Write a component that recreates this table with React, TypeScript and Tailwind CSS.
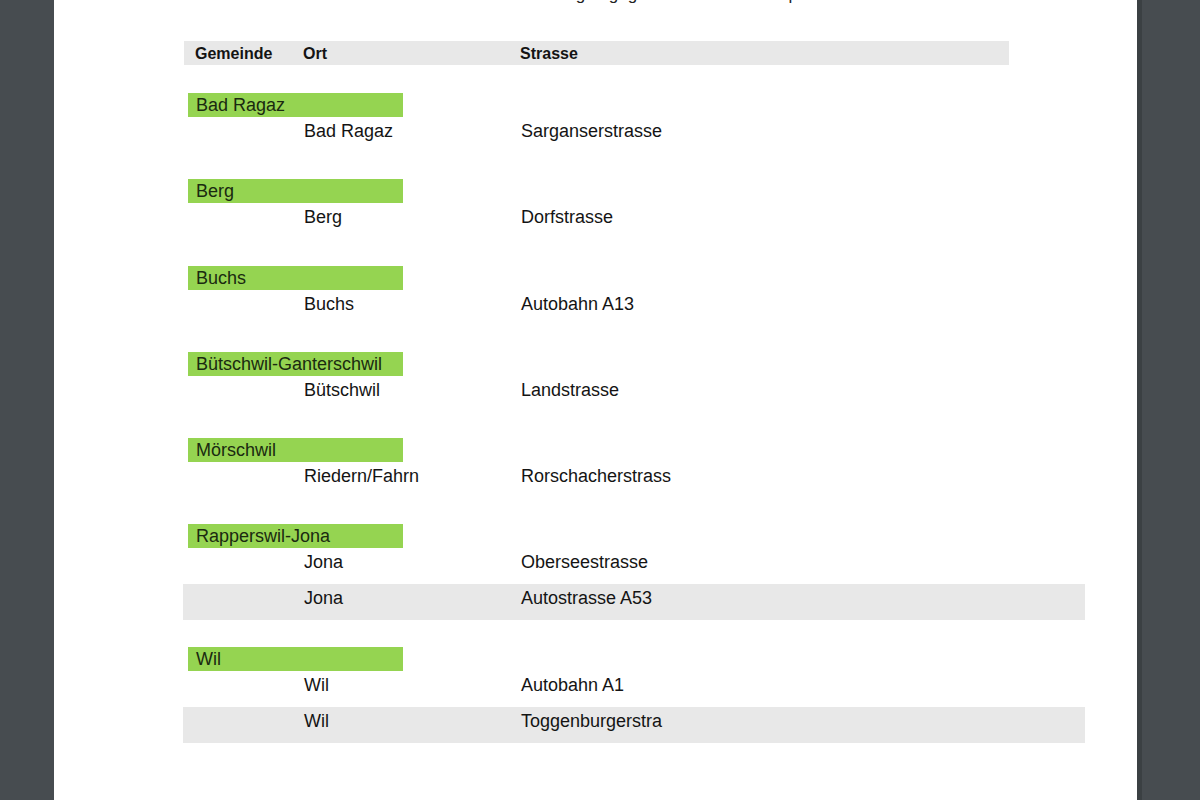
type Row = { ort: string; strasse: string };
type Group = { gemeinde: string; rows: Row[] };

const groups: Group[] = [
  { gemeinde: "Bad Ragaz", rows: [{ ort: "Bad Ragaz", strasse: "Sarganserstrasse" }] },
  { gemeinde: "Berg", rows: [{ ort: "Berg", strasse: "Dorfstrasse" }] },
  { gemeinde: "Buchs", rows: [{ ort: "Buchs", strasse: "Autobahn A13" }] },
  { gemeinde: "Bütschwil-Ganterschwil", rows: [{ ort: "Bütschwil", strasse: "Landstrasse" }] },
  { gemeinde: "Mörschwil", rows: [{ ort: "Riedern/Fahrn", strasse: "Rorschacherstrass" }] },
  {
    gemeinde: "Rapperswil-Jona",
    rows: [
      { ort: "Jona", strasse: "Oberseestrasse" },
      { ort: "Jona", strasse: "Autostrasse A53" },
    ],
  },
  {
    gemeinde: "Wil",
    rows: [
      { ort: "Wil", strasse: "Autobahn A1" },
      { ort: "Wil", strasse: "Toggenburgerstra" },
    ],
  },
];

export default function App() {
  return (
    <div
      className="flex h-[800px] w-[1200px] overflow-hidden bg-[#474c50]"
      style={{ fontFamily: '"Liberation Sans", Arial, sans-serif' }}
    >
      <div className="ml-[54px] h-full w-[1083px] shrink-0 bg-white pl-[129px] text-[#141414]">
        {/* title, mostly scrolled off */}
        <div className="h-[41px] overflow-hidden">
          <p className="-mt-[15px] pl-[320px] text-[17px] leading-[20px] text-[#222]">
            Messanlagen gegliedert nach Kanton per
          </p>
        </div>

        {/* Header */}
        <div className="ml-[1px] flex h-[24px] w-[825px] items-center bg-[#e8e8e8] pl-[11px] pt-[2px] text-[16px] font-bold">
          <span className="w-[108px]">Gemeinde</span>
          <span className="w-[217px]">Ort</span>
          <span>Strasse</span>
        </div>

        <div className="mt-[28px] flex flex-col gap-[26.3px]">
          {groups.map((g) => (
            <div key={g.gemeinde} className="flex flex-col">
              <div className="ml-[5px] flex h-[24px] w-[215px] items-center bg-[#95d451] pl-[8px] text-[18px] leading-none text-[#1a2a10]">
                {g.gemeinde}
              </div>
              {g.rows.map((r, i) => (
                <div
                  key={i}
                  className={
                    "flex h-[36px] w-[902px] pt-[3px] text-[18px] leading-[22px] " +
                    (i % 2 === 1 ? "bg-[#e8e8e8]" : "")
                  }
                >
                  <span className="w-[121px] shrink-0" />
                  <span className="w-[217px] shrink-0">{r.ort}</span>
                  <span>{r.strasse}</span>
                </div>
              ))}
            </div>
          ))}
        </div>
      </div>
      <div className="h-full w-[5px] shrink-0 bg-[#3b4043]" />
    </div>
  );
}
